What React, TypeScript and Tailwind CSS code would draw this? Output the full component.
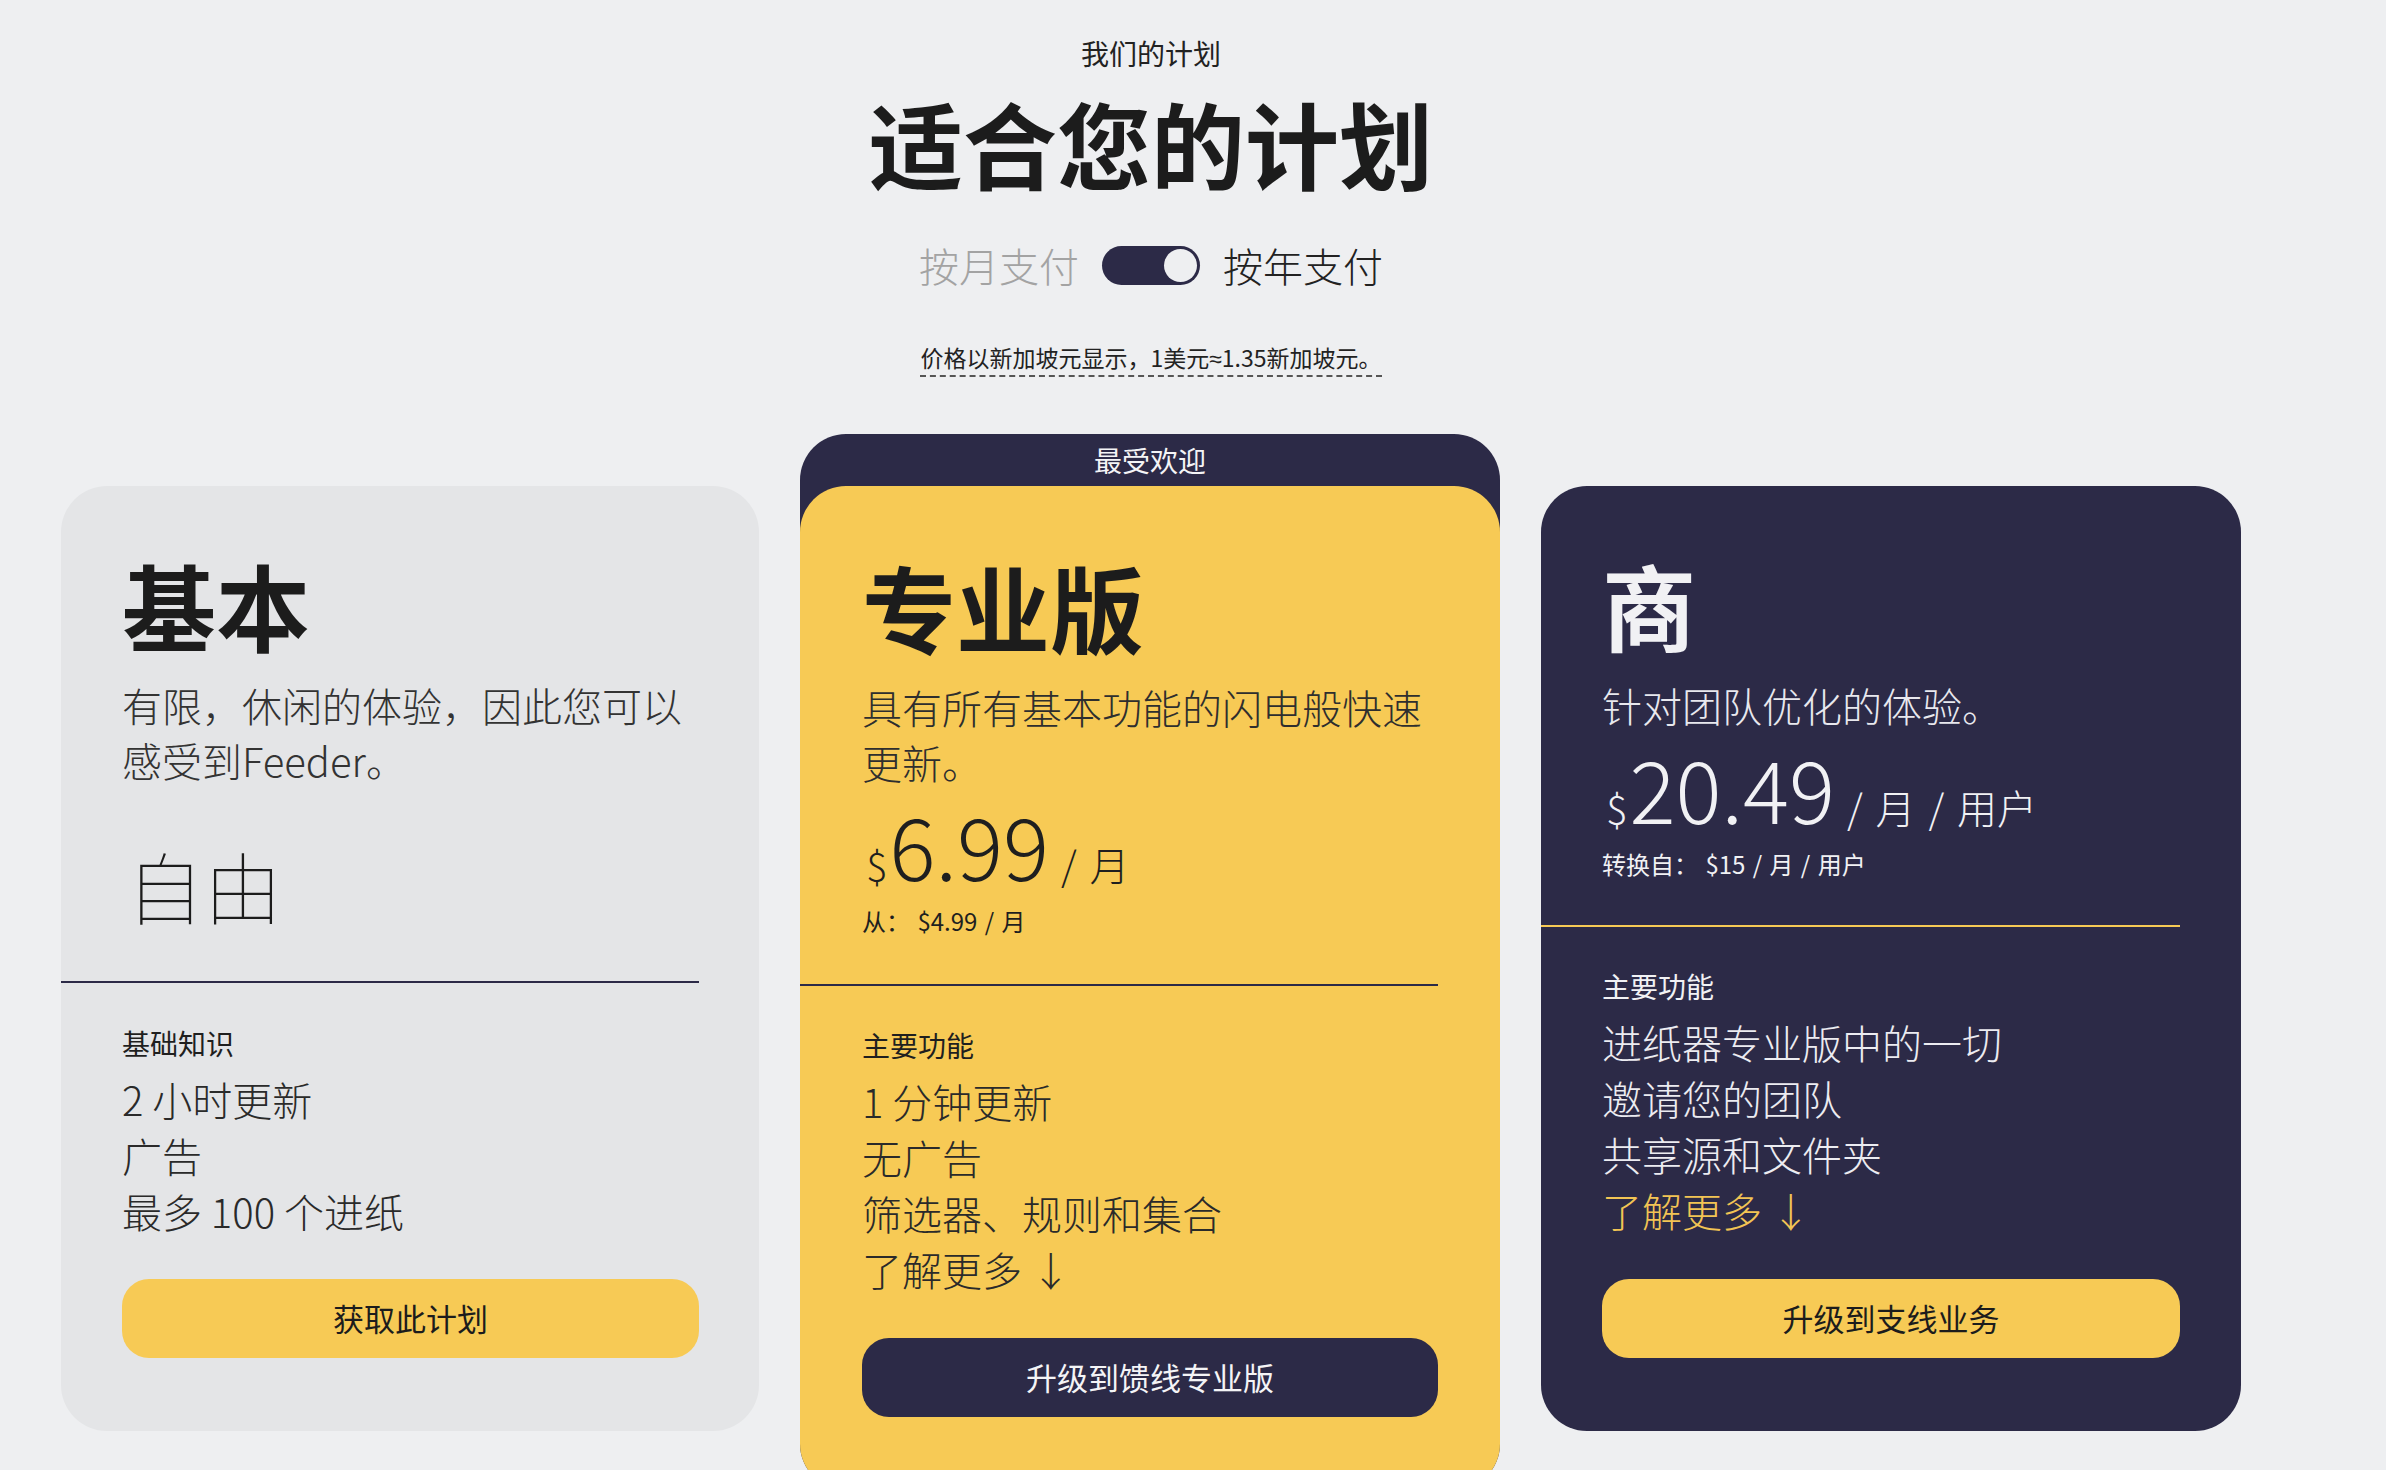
import React from "react";

const NAVY = "bg-[#2c2a47]";

function Divider({ color }: { color: string }) {
  return <div className={`-ml-[61px] h-[2px] ${color}`} />;
}

function Features({ items, tone }: { items: React.ReactNode[]; tone: string }) {
  return (
    <ul className={`mt-[8px] text-[40px] leading-[56px] font-light ${tone}`}>
      {items.map((it, i) => (
        <li key={i}>{it}</li>
      ))}
    </ul>
  );
}

function Price({
  amount,
  unit,
  sub,
  dark,
}: {
  amount: string;
  unit: string;
  sub: string;
  dark?: boolean;
}) {
  const tone = dark ? "text-[#f1f1f4]" : "text-[#1f1f1f]";
  return (
    <>
      <div className={`mt-[11px] flex items-baseline ${tone}`}>
        <span className="ml-[4px] text-[40px] font-light leading-none">$</span>
        <span className="ml-[2px] text-[86px] font-light leading-none">{amount}</span>
        <span className="ml-[12px] text-[40px] font-light leading-none [word-spacing:4px]">{unit}</span>
      </div>
      <div className={`mt-[16px] text-[24px] leading-[36px] font-normal [word-spacing:2px] ${tone}`}>{sub}</div>
    </>
  );
}

export default function App() {
  return (
    <div className="min-h-screen bg-[#eeeff1] font-['Noto_Sans_CJK_SC','Noto_Sans',sans-serif] text-[#1f1f1f]">
      <div className="px-[61px] pt-[33px]">
        <div className="w-[2180px]">
          {/* Header */}
          <div className="flex flex-col items-center">
            <div className="text-[28px] leading-[40px] font-normal text-[#222]">我们的计划</div>
            <h1 className="mt-[22px] text-[94px] leading-none font-bold text-[#1c1c1c]">适合您的计划</h1>
            <div className="mt-[56px] flex items-center gap-[23px] text-[40px] leading-none font-light">
              <span className="text-[#a3a3a3]">按月支付</span>
              <div className={`flex h-[39px] w-[98px] items-center justify-end rounded-full ${NAVY} px-[3px]`}>
                <div className="h-[33px] w-[33px] rounded-full bg-[#eeeff1]" />
              </div>
              <span className="text-[#222]">按年支付</span>
            </div>
            <div className="mt-[55px] border-b-2 border-dashed border-[#555] text-[23px] leading-[34px] text-[#222]">
              价格以新加坡元显示，1美元<span className="font-['Noto_Sans',sans-serif]">≈</span>1.35新加坡元。
            </div>
          </div>

          {/* Cards */}
          <div className="mt-[57px] grid grid-cols-[698px_700px_700px] gap-x-[41px] items-start">
            {/* Basic */}
            <div className="mt-[52px] rounded-[46px] bg-[#e4e5e7] pl-[61px] pr-[60px] pt-[71px] pb-[73px]">
              <h2 className="text-[94px] leading-none font-bold text-[#1c1c1c]">基本</h2>
              <p className="mt-[27px] text-[40px] leading-[55px] font-light text-[#333]">
                有限，休闲的体验，因此您可以感受到Feeder。
              </p>
              <div className="mt-[58px] pl-[4px] text-[78px] leading-none font-thin text-[#1c1c1c]">自由</div>
              <div className="mt-[57px]">
                <Divider color={NAVY} />
              </div>
              <div className="mt-[41px] text-[28px] leading-[39px] font-normal text-[#1f1f1f]">基础知识</div>
              <Features tone="text-[#2a2a2a]" items={["2 小时更新", "广告", "最多 100 个进纸"]} />
              <button className="mt-[40px] flex h-[79px] w-full items-center justify-center rounded-[27px] bg-[#f7ca55] text-[31px] font-normal text-[#1c1c1c]">
                获取此计划
              </button>
            </div>

            {/* Pro */}
            <div className={`rounded-[46px] ${NAVY}`}>
              <div className="flex h-[52px] items-center justify-center text-[28px] font-normal text-[#f4f4f6]">
                最受欢迎
              </div>
              <div className="rounded-[46px] bg-[#f7ca55] pl-[62px] pr-[62px] pt-[73px] pb-[73px]">
                <h2 className="text-[94px] leading-none font-bold text-[#1c1c1c]">专业版</h2>
                <p className="mt-[27px] text-[40px] leading-[55px] font-light text-[#2e2e2e]">
                  具有所有基本功能的闪电般快速更新。
                </p>
                <Price amount="6.99" unit="/ 月" sub="从： $4.99 / 月" />
                <div className="mt-[45px]">
                  <div className={`-ml-[62px] h-[2px] ${NAVY}`} />
                </div>
                <div className="mt-[40px] text-[28px] leading-[39px] font-normal text-[#1f1f1f]">主要功能</div>
                <Features
                  tone="text-[#2a2a2a]"
                  items={["1 分钟更新", "无广告", "筛选器、规则和集合", "了解更多 ↓"]}
                />
                <button className={`mt-[41px] flex h-[79px] w-full items-center justify-center rounded-[27px] ${NAVY} text-[31px] font-normal text-[#f4f4f6]`}>
                  升级到馈线专业版
                </button>
              </div>
            </div>

            {/* Business */}
            <div className={`mt-[52px] rounded-[46px] ${NAVY} pl-[61px] pr-[61px] pt-[71px] pb-[73px]`}>
              <h2 className="text-[94px] leading-none font-bold text-[#f1f1f4]">商</h2>
              <p className="mt-[27px] text-[40px] leading-[55px] font-light text-[#e8e8ee]">针对团队优化的体验。</p>
              <Price amount="20.49" unit="/ 月 / 用户" sub="转换自： $15 / 月 / 用户" dark />
              <div className="mt-[43px]">
                <div className="-ml-[61px] h-[2px] bg-[#f7ca55]" />
              </div>
              <div className="mt-[40px] text-[28px] leading-[39px] font-normal text-[#f1f1f4]">主要功能</div>
              <ul className="mt-[8px] text-[40px] leading-[56px] font-light text-[#ececf1]">
                <li>进纸器专业版中的一切</li>
                <li>邀请您的团队</li>
                <li>共享源和文件夹</li>
                <li className="text-[#f2c454]">了解更多 ↓</li>
              </ul>
              <button className="mt-[41px] flex h-[79px] w-full items-center justify-center rounded-[27px] bg-[#f7ca55] text-[31px] font-normal text-[#1c1c1c]">
                升级到支线业务
              </button>
            </div>
          </div>
        </div>
      </div>
    </div>
  );
}
